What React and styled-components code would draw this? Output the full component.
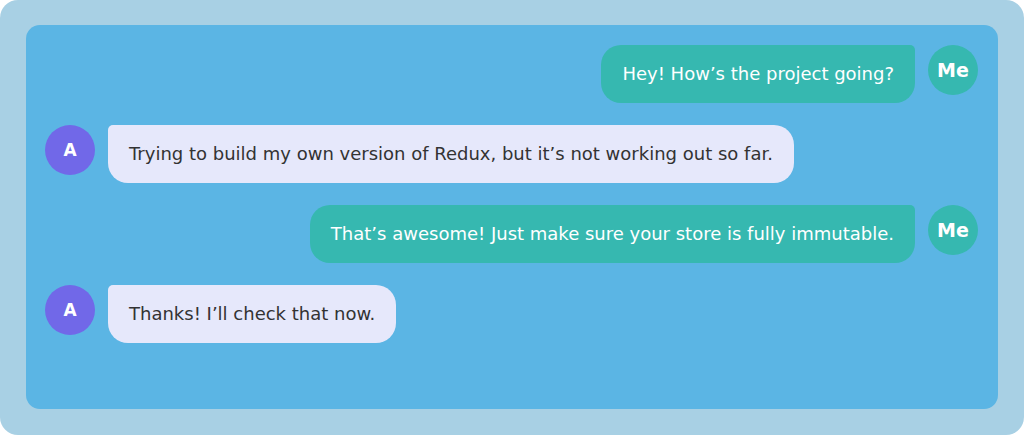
import React from "react";
import styled, { createGlobalStyle } from "styled-components";

const Global = createGlobalStyle`
  html, body { margin: 0; padding: 0; background: #ffffff; }
  body { font-family: "DejaVu Sans", Tahoma, sans-serif; }
`;

const Frame = styled.div`
  width: 1024px;
  height: 435px;
  box-sizing: border-box;
  padding: 25px 26px 26px 26px;
  background: #a8d0e4;
  border-radius: 18px;
`;

const Panel = styled.div`
  height: 100%;
  box-sizing: border-box;
  background: #5bb5e4;
  border-radius: 14px;
  padding: 20px 20px 20px 19px;
  display: flex;
  flex-direction: column;
  gap: 22px;
`;

const Row = styled.div`
  display: flex;
  align-items: flex-start;
  gap: 13px;
  justify-content: ${(p) => (p.$mine ? "flex-end" : "flex-start")};
`;

const Avatar = styled.div`
  width: 50px;
  height: 50px;
  flex: none;
  border-radius: 50%;
  background: ${(p) => (p.$mine ? "#36b8b0" : "#7168e8")};
  color: #ffffff;
  font-weight: bold;
  font-size: ${(p) => (p.$mine ? "19px" : "17px")};
  display: flex;
  align-items: center;
  justify-content: center;
`;

const Bubble = styled.div`
  box-sizing: border-box;
  height: 58px;
  padding: 0 21px;
  display: flex;
  align-items: center;
  font-size: 18px;
  line-height: 22px;
  color: ${(p) => (p.$mine ? "#ffffff" : "#333333")};
  background: ${(p) => (p.$mine ? "#36b8b0" : "#e6e8fb")};
  border-radius: ${(p) => (p.$mine ? "20px 5px 20px 20px" : "5px 20px 20px 20px")};
`;

const messages = [
  { mine: true, text: "Hey! How’s the project going?" },
  { mine: false, text: "Trying to build my own version of Redux, but it’s not working out so far." },
  { mine: true, text: "That’s awesome! Just make sure your store is fully immutable." },
  { mine: false, text: "Thanks! I’ll check that now." },
];

export default function App() {
  return (
    <>
      <Global />
      <Frame>
        <Panel>
          {messages.map((m, i) => (
            <Row key={i} $mine={m.mine}>
              {!m.mine && <Avatar>A</Avatar>}
              <Bubble $mine={m.mine}>{m.text}</Bubble>
              {m.mine && <Avatar $mine>Me</Avatar>}
            </Row>
          ))}
        </Panel>
      </Frame>
    </>
  );
}
